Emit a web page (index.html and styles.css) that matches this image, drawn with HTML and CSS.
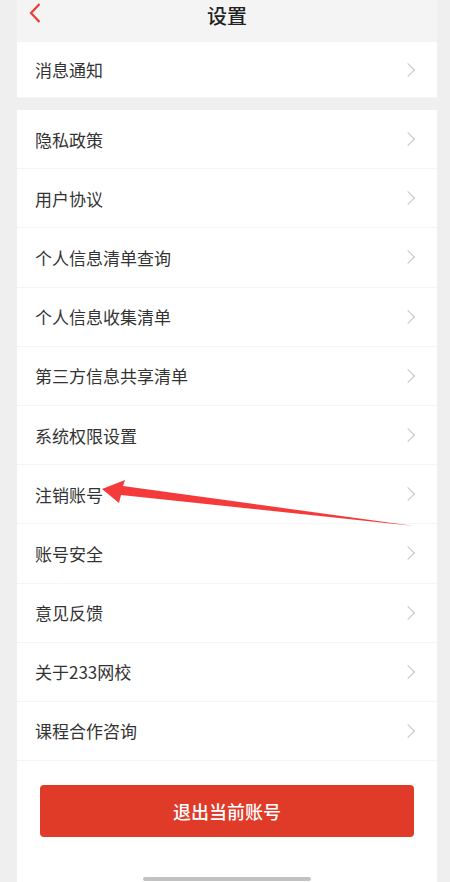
FILE: index.html
```html
<!DOCTYPE html>
<html lang="zh-CN">

<head>
  <meta charset="UTF-8">
  <meta name="viewport" content="width=device-width, initial-scale=1.0">
  <title>设置</title>
  <link rel="stylesheet" href="styles.css">
</head>

<body>
  <div class="page">
    <div class="header">
      <span class="back">
        <svg width="14" height="22" viewBox="0 0 14 22"><path d="M11.5 2 L3 11 L11.5 20" fill="none" stroke="#e8402f" stroke-width="2.2"/></svg>
      </span>
      <h1>设置</h1>
    </div>

    <div class="card">
      <div class="row">消息通知<span class="chev"></span></div>
    </div>

    <div class="card last">
      <div class="row">隐私政策<span class="chev"></span></div>
      <div class="row">用户协议<span class="chev"></span></div>
      <div class="row">个人信息清单查询<span class="chev"></span></div>
      <div class="row">个人信息收集清单<span class="chev"></span></div>
      <div class="row">第三方信息共享清单<span class="chev"></span></div>
      <div class="row">系统权限设置<span class="chev"></span></div>
      <div class="row">注销账号<span class="chev"></span></div>
      <div class="row">账号安全<span class="chev"></span></div>
      <div class="row">意见反馈<span class="chev"></span></div>
      <div class="row">关于233网校<span class="chev"></span></div>
      <div class="row">课程合作咨询<span class="chev"></span></div>
      <div class="logout-wrap">
        <button class="logout">退出当前账号</button>
      </div>
      <div class="home-bar"></div>
    </div>

    <!-- annotation arrow pointing at 注销账号 -->
    <svg class="mark" width="450" height="882" viewBox="0 0 450 882">
      <polygon points="102,489 125,480 123,486 414,526 121,495 119,503" fill="#f43a3a"/>
    </svg>
  </div>
</body>

</html>
```

FILE: styles.css
```css
body {
  margin: 0;
  background-color: #efefef;
  font-family: "Noto Sans CJK SC", "Noto Sans", sans-serif;
  color: #333;
}

.page {
  width: 420px;
  margin-left: 17px;
  min-height: 882px;
}

.header {
  height: 42px;
  background-color: #f4f4f4;
  display: flex;
  align-items: center;
  justify-content: center;
  position: relative;
}

.header h1 {
  margin: 0;
  font-size: 20px;
  font-weight: 500;
  color: #222;
  line-height: 1;
  margin-top: -11px;
}

.back {
  position: absolute;
  left: 11px;
  top: 2px;
}

.card {
  background: #fff;
}

.card + .card {
  margin-top: 12px;
}

.row {
  height: 59.2px;
  display: flex;
  align-items: center;
  justify-content: space-between;
  padding: 0 18px;
  font-size: 17px;
  color: #333;
  border-bottom: 1px solid #f4f4f4;
  box-sizing: border-box;
}

.card .row:first-child {
  height: 56px;
}

.card.last .row:first-child {
  height: 59.2px;
}

.chev {
  width: 9px;
  height: 9px;
  border-top: 1.8px solid #c4c4c4;
  border-right: 1.8px solid #c4c4c4;
  transform: rotate(45deg);
  margin-right: 6px;
}

.logout-wrap {
  padding: 24px 23px 0 23px;
}

.logout {
  width: 100%;
  height: 52px;
  border: none;
  border-radius: 4px;
  background-color: #e03a28;
  color: #fff;
  font-family: inherit;
  font-size: 18px;
  font-weight: 500;
}

.home-bar {
  width: 168px;
  height: 4px;
  border-radius: 2px;
  background: #c2c2c2;
  margin: 40px auto 0;
}

.card.last {
  padding-bottom: 1px;
}

.mark {
  position: absolute;
  left: 0;
  top: 0;
  pointer-events: none;
}
```
